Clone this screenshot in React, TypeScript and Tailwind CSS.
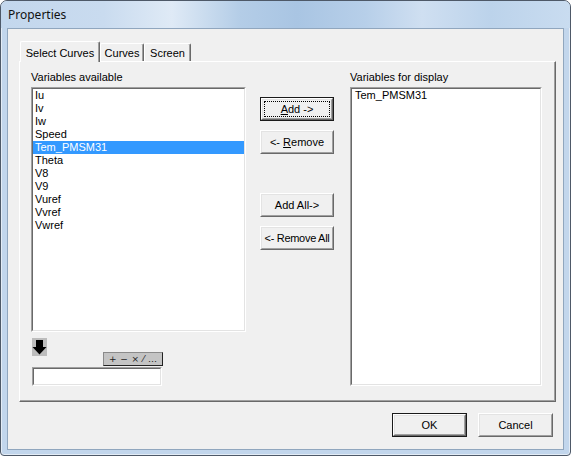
import React from "react";

const F = "font-['Liberation_Sans',Arial,sans-serif] text-[11px] leading-[13px] text-black";

function Raised({
  w,
  h,
  def,
  focus,
  children,
}: {
  w: string;
  h: string;
  def?: boolean;
  focus?: boolean;
  children: React.ReactNode;
}) {
  const inner = (
    <div className="flex-1 flex border border-t-white border-l-white border-r-[#696969] border-b-[#696969]">
      <div className="flex-1 flex border border-t-[#e3e3e3] border-l-[#e3e3e3] border-r-[#a0a0a0] border-b-[#a0a0a0] bg-[#f0f0f0] p-[1px]">
        {focus ? (
          <div className="flex-1 flex items-center justify-center border border-dotted border-black whitespace-nowrap">
            {children}
          </div>
        ) : (
          <div className="flex-1 flex items-center justify-center whitespace-nowrap">{children}</div>
        )}
      </div>
    </div>
  );
  return def ? (
    <div className={`${w} ${h} flex border border-[#1a1a1a]`}>{inner}</div>
  ) : (
    <div className={`${w} ${h} flex`}>{inner}</div>
  );
}

function Sunken({ className, children }: { className: string; children?: React.ReactNode }) {
  return (
    <div className={`${className} flex border border-t-[#a0a0a0] border-l-[#a0a0a0] border-r-white border-b-white`}>
      <div className="flex-1 border border-t-[#696969] border-l-[#696969] border-r-[#e3e3e3] border-b-[#e3e3e3] bg-white overflow-hidden">
        {children}
      </div>
    </div>
  );
}

const items = ["Iu", "Iv", "Iw", "Speed", "Tem_PMSM31", "Theta", "V8", "V9", "Vuref", "Vvref", "Vwref"];

export default function App() {
  return (
    <div className={`${F} w-[571px] h-[456px] flex flex-col bg-[#c2d6ec] border border-[#4e5968] rounded-t-[7px] rounded-b-[4px] overflow-hidden shadow-[inset_0_0_0_1px_rgba(255,255,255,0.55)]`}>
      {/* title bar */}
      <div className="h-[27px] flex items-center pl-[7px] bg-[linear-gradient(90deg,#c3d7ed_0%,#c9dbef_18%,#dfeaf6_30%,#b4cde7_42%,#a9c5e3_52%,#b7cfe9_64%,#cfdff1_74%,#bcd3eb_86%,#c9dcf0_100%)]">
        <span className="font-['Noto_Sans',sans-serif] text-[12px] text-[#111] pb-[1px]">Properties</span>
      </div>

      {/* client */}
      <div className="ml-[6px] w-[557px] h-[422px] border border-[#90a6be] bg-[#f0f0f0] flex flex-col pl-[11px] pt-[12px]">
        {/* tabs */}
        <div className="relative z-10 -mb-px h-[21px] flex items-end pl-px">
          <div className="h-[21px] w-[80px] flex items-start justify-center pt-[5px] bg-[#f0f0f0] border-t border-l border-t-white border-l-white border-r border-r-[#696969] rounded-tl-[2px] rounded-tr-[2px] shadow-[inset_-1px_0_0_#a0a0a0]">
            Select Curves
          </div>
          <div className="h-[18px] mb-px w-[44px] flex items-start justify-center pt-[3px] border-t border-l border-t-white border-l-white border-r border-r-[#696969] rounded-tl-[2px] rounded-tr-[2px] shadow-[inset_-1px_0_0_#a0a0a0]">
            Curves
          </div>
          <div className="h-[18px] mb-px w-[47px] flex items-start justify-center pt-[3px] border-t border-l border-t-white border-l-white border-r border-r-[#696969] rounded-tl-[2px] rounded-tr-[2px] shadow-[inset_-1px_0_0_#a0a0a0]">
            Screen
          </div>
        </div>

        {/* panel */}
        <div className="w-[537px] h-[341px] border border-t-white border-l-white border-r-[#696969] border-b-[#696969] shadow-[inset_-1px_-1px_0_#a0a0a0] flex pl-[11px] pt-[9px]">
          {/* left column */}
          <div className="w-[215px] flex flex-col">
            <div className="h-[13px]">Variables available</div>
            <Sunken className="mt-[3px] h-[245px] w-[215px]">
              <div className="flex flex-col">
                {items.map((it) =>
                  it === "Tem_PMSM31" ? (
                    <div key={it} className="h-[13px] pl-[2px] bg-[#3399ff] text-white">
                      {it}
                    </div>
                  ) : (
                    <div key={it} className="h-[13px] pl-[2px]">
                      {it}
                    </div>
                  )
                )}
              </div>
            </Sunken>
            <div className="mt-[6px] ml-px w-[15px] h-[18px] bg-[#bdbdbd] flex items-center justify-center">
              <svg width="15" height="18" viewBox="0 0 15 18">
                <rect x="4" y="2" width="7" height="8" fill="#000" />
                <polygon points="0.5,9 14.5,9 7.5,16.5" fill="#000" />
              </svg>
            </div>
            <div className="-mt-[4px] ml-[72px] w-[60px] h-[14px] bg-[#c4c4c4] border border-[#8a8a8a] border-r-[#222] border-b-[#222] flex items-center justify-around px-[3px] font-['DejaVu_Sans',sans-serif] text-[9px] leading-[12px] text-[#222]">
              <span>+</span>
              <span>−</span>
              <span>×</span>
              <span>⁄</span>
              <span>…</span>
            </div>
            <Sunken className="mt-px ml-px w-[130px] h-[19px]" />
          </div>

          {/* middle buttons */}
          <div className="ml-[14px] w-[74px] flex flex-col pt-[26px]">
            <Raised w="w-[74px]" h="h-[24px]" def focus>
              <span>
                <span className="underline">A</span>dd -&gt;
              </span>
            </Raised>
            <div className="mt-[9px]">
              <Raised w="w-[74px]" h="h-[24px]">
                <span>
                  &lt;- <span className="underline">R</span>emove
                </span>
              </Raised>
            </div>
            <div className="mt-[39px]">
              <Raised w="w-[74px]" h="h-[24px]">
                <span>Add All-&gt;</span>
              </Raised>
            </div>
            <div className="mt-[9px]">
              <Raised w="w-[74px]" h="h-[24px]">
                <span className="tracking-[-0.3px]">&lt;- Remove All</span>
              </Raised>
            </div>
          </div>

          {/* right column */}
          <div className="ml-[16px] w-[192px] flex flex-col">
            <div className="h-[13px]">Variables for display</div>
            <Sunken className="mt-[3px] h-[299px] w-[192px]">
              <div className="h-[13px] pl-[3px]">Tem_PMSM31</div>
            </Sunken>
          </div>
        </div>

        {/* bottom buttons */}
        <div className="mt-[11px] w-[537px] flex justify-end gap-[11px] pr-[3px]">
          <Raised w="w-[75px]" h="h-[24px]" def>
            <span>OK</span>
          </Raised>
          <Raised w="w-[75px]" h="h-[24px]">
            <span>Cancel</span>
          </Raised>
        </div>
      </div>
    </div>
  );
}
